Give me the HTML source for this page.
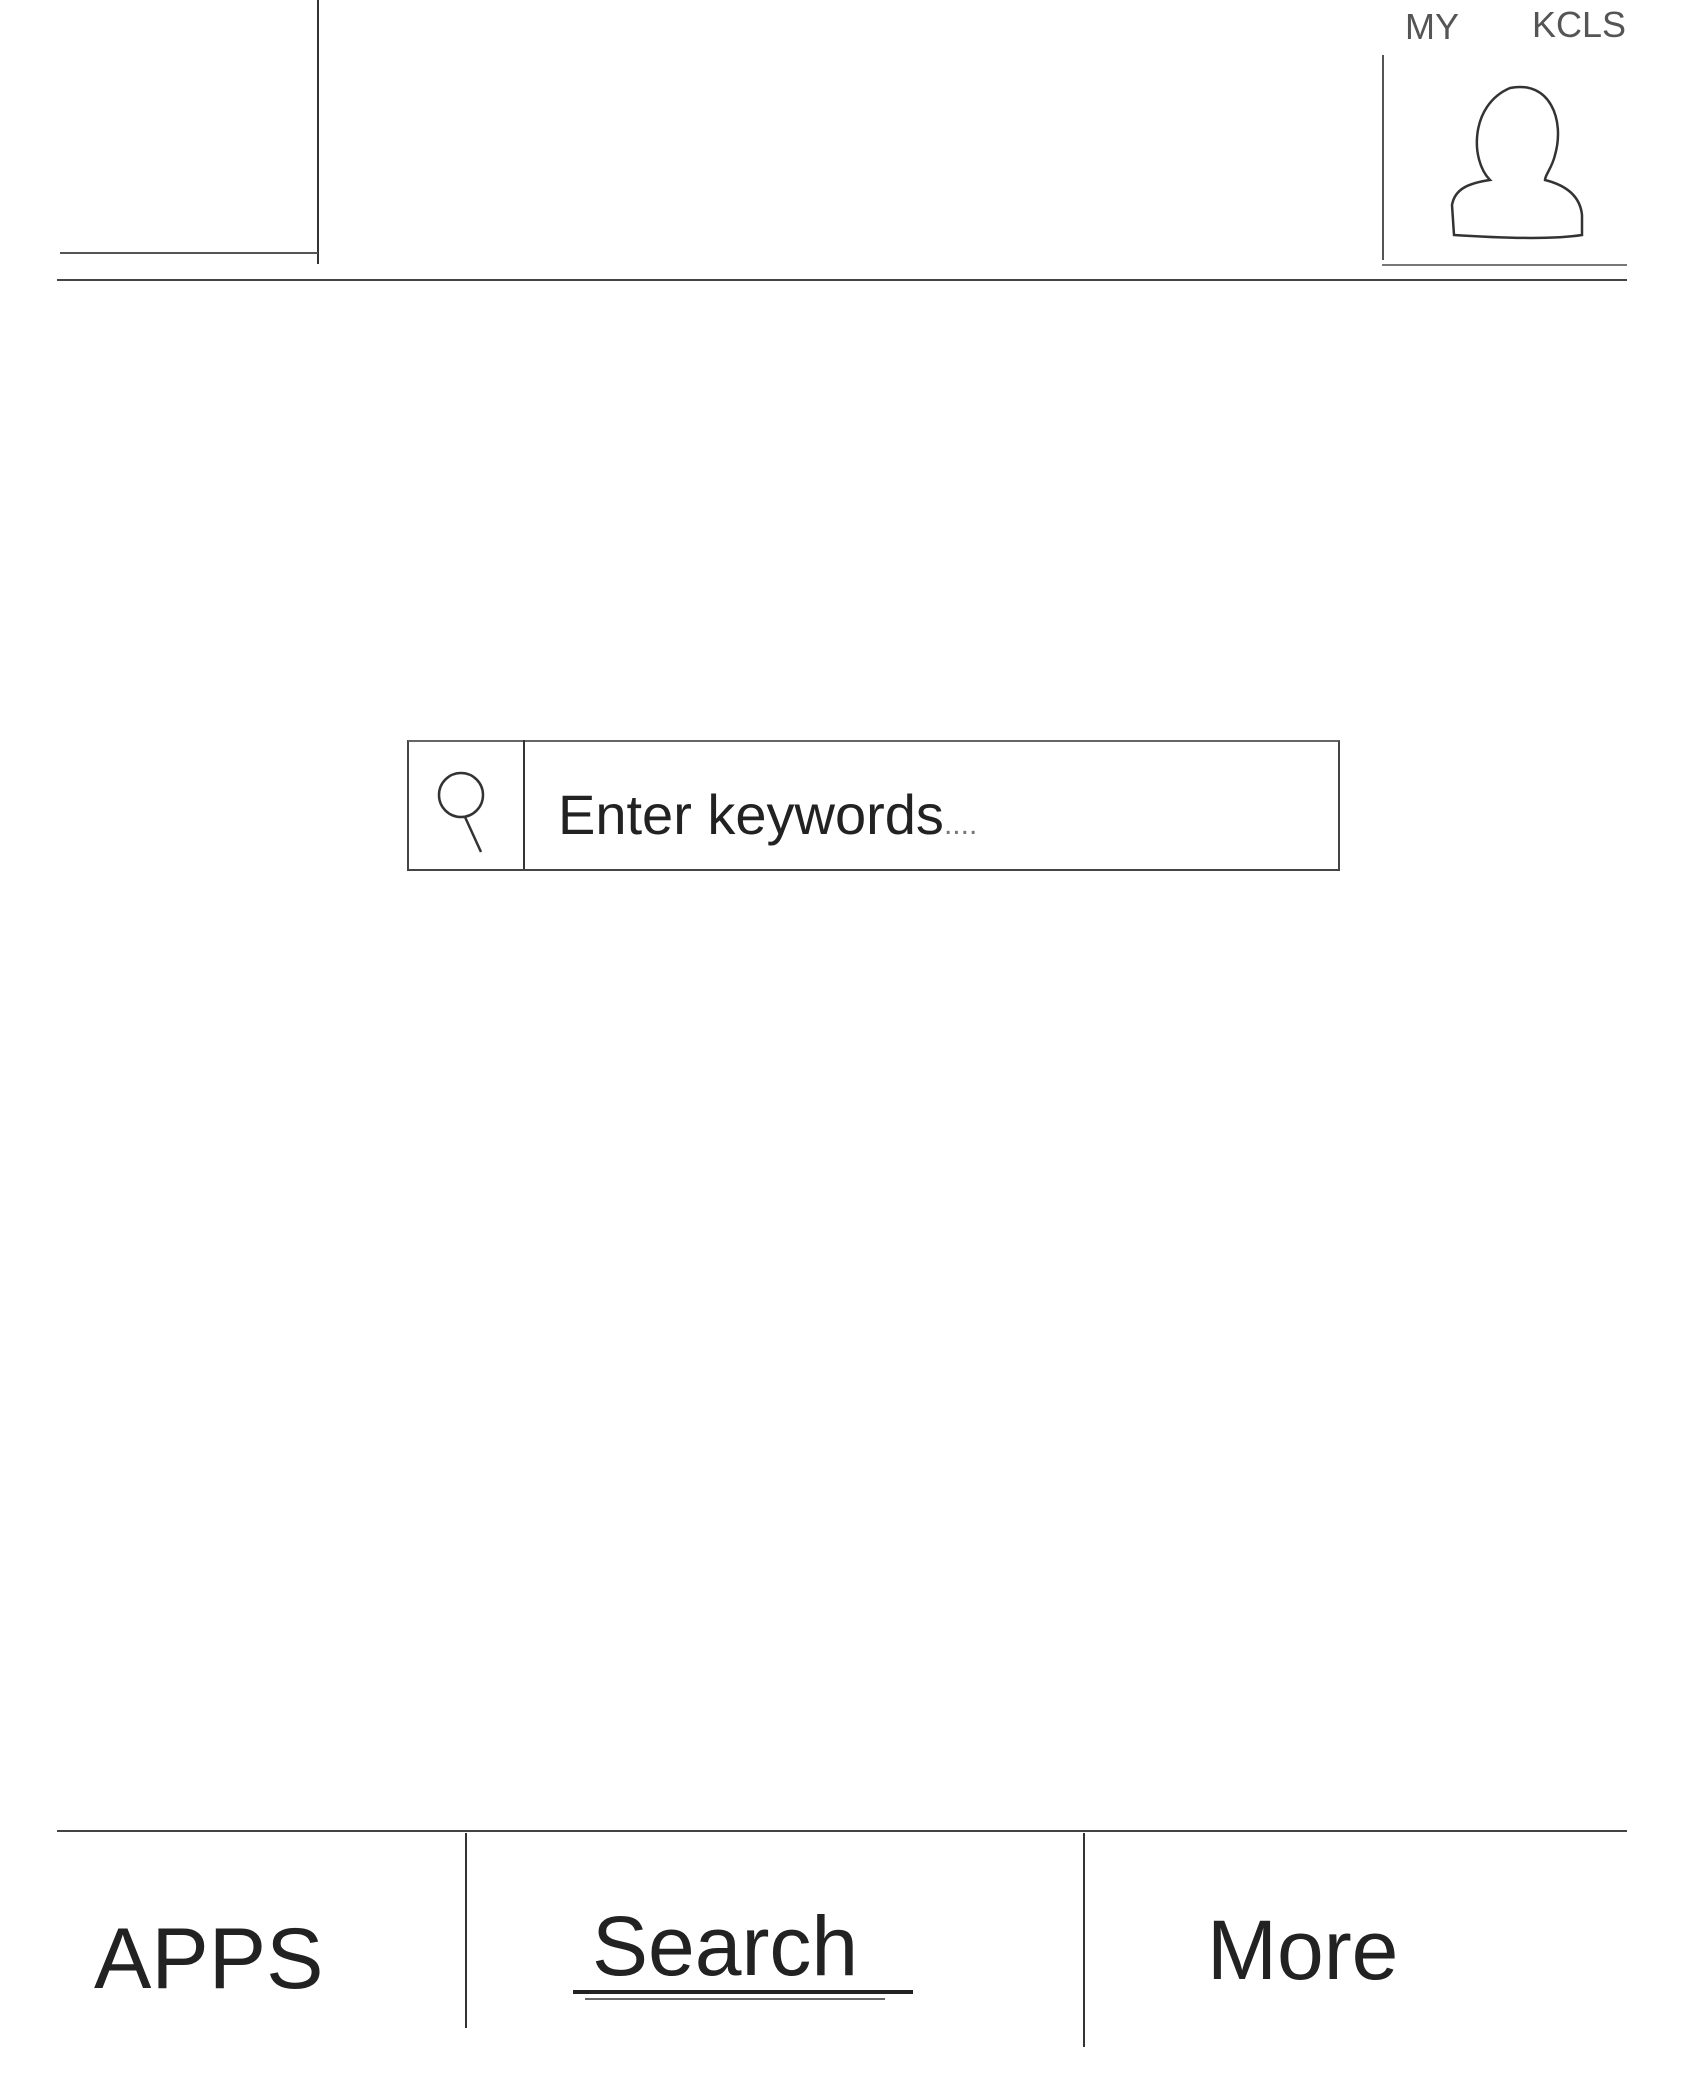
<!DOCTYPE html>
<html><head><meta charset="utf-8"><style>
html,body{margin:0;padding:0;background:#fff;}
body{width:1700px;height:2098px;position:relative;overflow:hidden;font-family:"Liberation Sans",sans-serif;color:#222;}
.l{position:absolute;background:#333;}
.t{position:absolute;white-space:nowrap;font-weight:300;}
</style></head><body>
<div class="l" style="left:317px;top:0;width:2px;height:264px"></div>
<div class="l" style="left:60px;top:252px;width:258px;height:2px;background:#555"></div>
<div class="l" style="left:57px;top:279px;width:1570px;height:2px;background:#444"></div>
<div class="l" style="left:1382px;top:55px;width:2px;height:205px;background:#555"></div>
<div class="l" style="left:1382px;top:264px;width:245px;height:2px;background:#777"></div>
<div class="t" style="left:1405px;top:6px;font-size:36px;color:#555">MY</div>
<div class="t" style="left:1532px;top:4px;font-size:36px;color:#555">KCLS</div>
<svg style="position:absolute;left:1440px;top:80px" width="150" height="165" viewBox="0 0 150 165">
<path d="M50 100 C30 80 30 25 70 8 C110 0 125 40 115 75 C112 88 105 95 105 100 C125 105 140 115 142 135 L142 155 C110 160 60 158 14 155 L12 125 C15 108 30 103 50 100 Z" fill="none" stroke="#333" stroke-width="2.5"/>
</svg>
<div style="position:absolute;left:407px;top:740px;width:929px;height:127px;border:2px solid #444;border-top-color:#666"></div>
<div class="l" style="left:523px;top:740px;width:2px;height:129px"></div>
<svg style="position:absolute;left:425px;top:760px" width="80" height="95" viewBox="0 0 80 95">
<circle cx="36" cy="35" r="22" fill="none" stroke="#333" stroke-width="2.5"/>
<path d="M40 57 L56 92" stroke="#333" stroke-width="2.5" fill="none"/>
</svg>
<div class="t" style="left:558px;top:782px;font-size:56px;color:#222">Enter keywords<span style="font-size:30px;color:#777">....</span></div>
<div class="l" style="left:57px;top:1830px;width:1570px;height:2px;background:#444"></div>
<div class="l" style="left:465px;top:1833px;width:2px;height:195px"></div>
<div class="l" style="left:1083px;top:1833px;width:2px;height:214px"></div>
<div class="t" style="left:94px;top:1910px;font-size:86px">APPS</div>
<div class="t" style="left:592px;top:1898px;font-size:84px">Search</div>
<div class="l" style="left:573px;top:1990px;width:340px;height:4px;background:#222"></div>
<div class="l" style="left:585px;top:1998px;width:300px;height:2px;background:#666"></div>
<div class="t" style="left:1207px;top:1902px;font-size:84px">More</div>
</body></html>
